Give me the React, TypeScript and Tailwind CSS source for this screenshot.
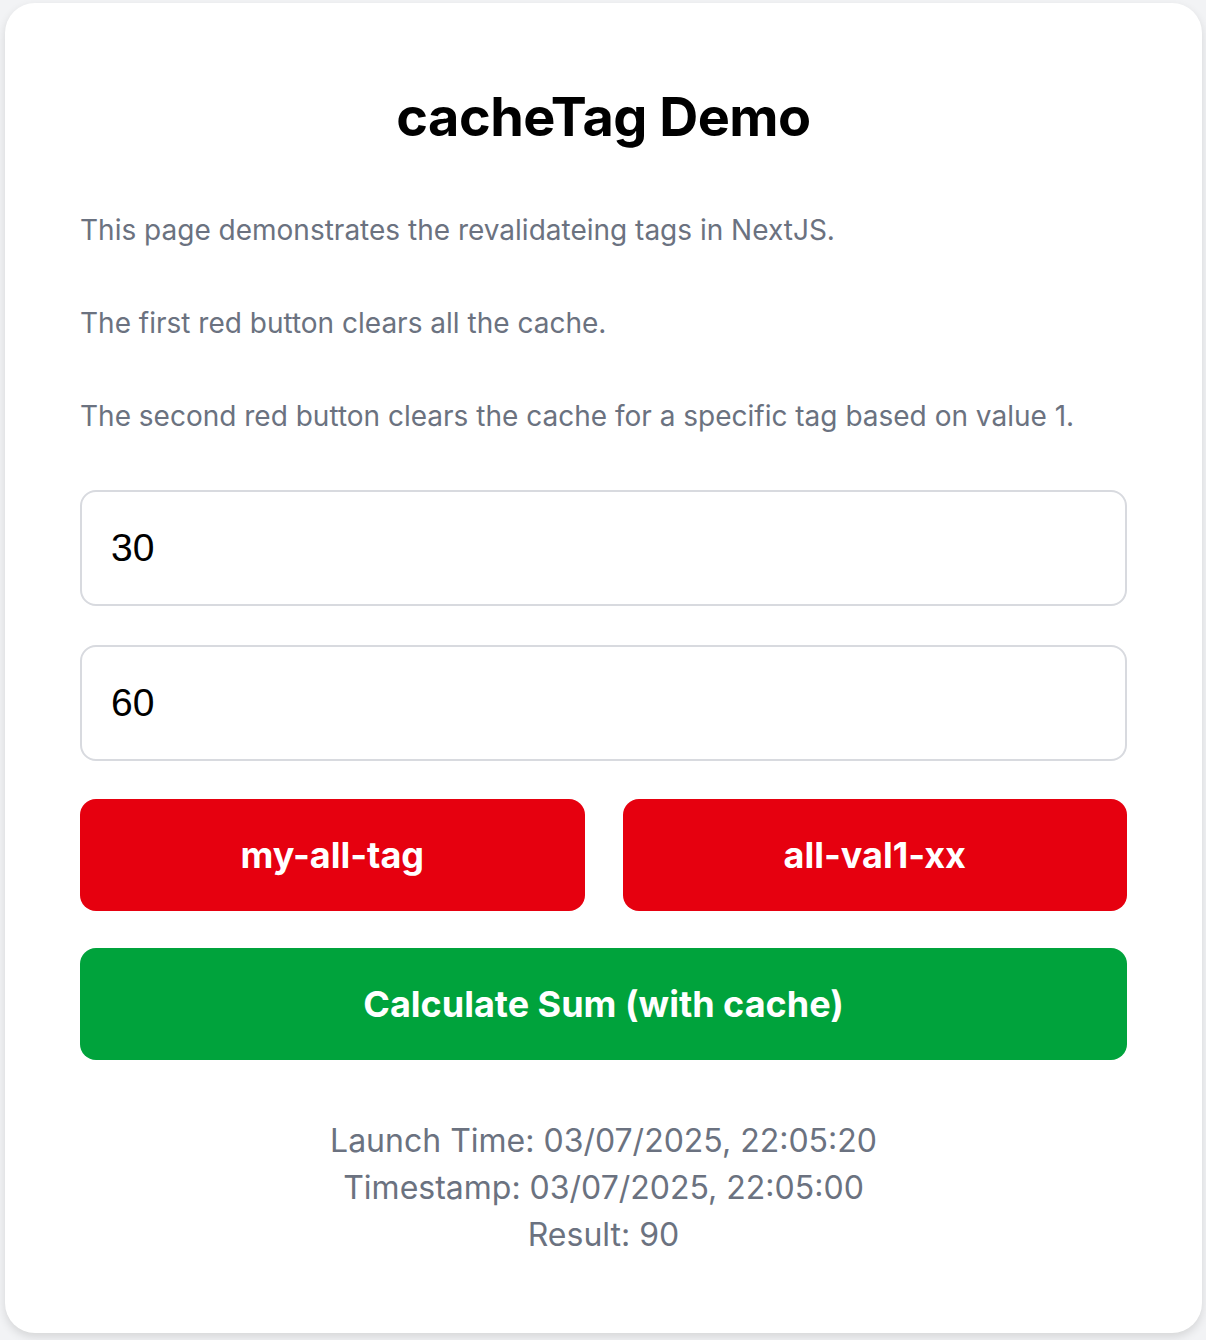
export default function App() {
  return (
    <div
      className="min-h-[1340px] bg-[#f2f3f5] pt-[3px] pl-[5px] pr-[4px] pb-[7px]"
      style={{ fontFamily: "Inter, 'Noto Sans', sans-serif" }}
    >
      <div className="h-[1330px] rounded-[30px] bg-white px-[75px] pt-[84px] shadow-[0_4px_10px_rgba(0,0,0,0.12)]">
        <h1 className="text-center text-[54px] font-bold leading-[60px] tracking-[-0.5px] text-black">
          cacheTag Demo
        </h1>

        <div className="mt-[65px] flex flex-col gap-[57px] text-[28px] leading-[36px] text-[#6b7280]">
          <p>This page demonstrates the revalidateing tags in NextJS.</p>
          <p>The first red button clears all the cache.</p>
          <p>The second red button clears the cache for a specific tag based on value 1.</p>
        </div>

        <div className="mt-[56px] flex flex-col gap-[39px]">
          <input
            type="text"
            defaultValue="30"
            className="h-[116px] w-full rounded-[16px] border-2 border-[#d8dadf] px-[29px] text-[39px] text-black outline-none"
            style={{ fontFamily: "'Liberation Sans', Arial, sans-serif" }}
          />
          <input
            type="text"
            defaultValue="60"
            className="h-[116px] w-full rounded-[16px] border-2 border-[#d8dadf] px-[29px] text-[39px] text-black outline-none"
            style={{ fontFamily: "'Liberation Sans', Arial, sans-serif" }}
          />
        </div>

        <div className="mt-[38px] grid grid-cols-2 gap-[38px]">
          <button className="h-[112px] rounded-[16px] bg-[#e6000f] text-[36px] font-bold text-white">
            my-all-tag
          </button>
          <button className="h-[112px] rounded-[16px] bg-[#e6000f] text-[36px] font-bold text-white">
            all-val1-xx
          </button>
        </div>

        <button className="mt-[37px] h-[112px] w-full rounded-[16px] bg-[#00a33c] text-[36px] font-bold text-white">
          Calculate Sum (with cache)
        </button>

        <div className="mt-[57px] text-center text-[32px] leading-[47px] text-[#6b7280]">
          <p>Launch Time: 03/07/2025, 22:05:20</p>
          <p>Timestamp: 03/07/2025, 22:05:00</p>
          <p>Result: 90</p>
        </div>
      </div>
    </div>
  );
}
